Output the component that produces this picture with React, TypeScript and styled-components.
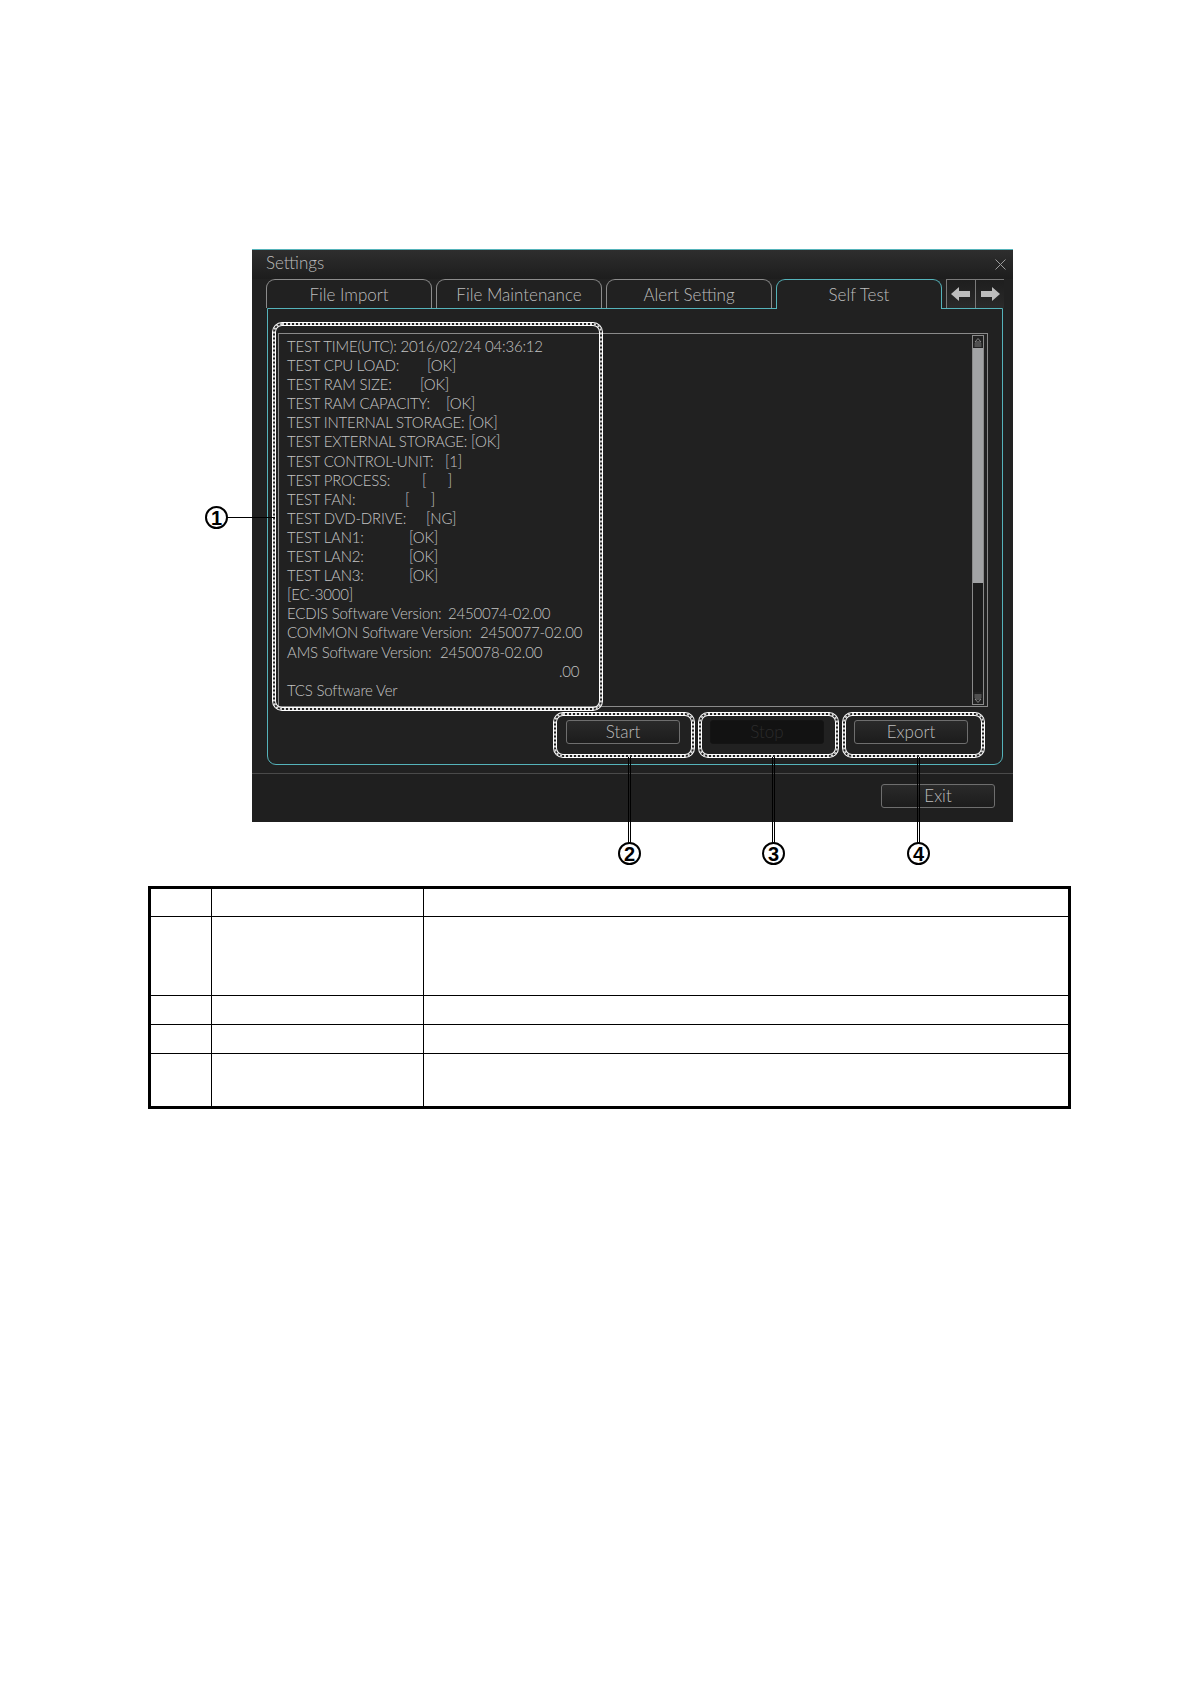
import React from "react";
import styled, { createGlobalStyle, css } from "styled-components";

const CYAN = "#55b3ba";
const PANEL_BG = "#212121";
const LINE_GREY = "#8a8a8a";
const TEXT = "#c4c4c4";

const GlobalStyle = createGlobalStyle`
  html, body {
    margin: 0;
    padding: 0;
    background: #ffffff;
  }
  body {
    font-family: "Liberation Sans", Arial, sans-serif;
  }
`;

type Line = { label: string; value?: string; tab?: number; empty?: boolean };

const lines: Line[] = [
  { label: "TEST TIME(UTC): 2016/02/24 04:36:12" },
  { label: "TEST CPU LOAD:", value: "[OK]", tab: 140 },
  { label: "TEST RAM SIZE:", value: "[OK]", tab: 133 },
  { label: "TEST RAM CAPACITY:", value: "[OK]", tab: 159 },
  { label: "TEST INTERNAL STORAGE: [OK]" },
  { label: "TEST EXTERNAL STORAGE: [OK]" },
  { label: "TEST CONTROL-UNIT:", value: "[1]", tab: 158 },
  { label: "TEST PROCESS:", value: "", tab: 135, empty: true },
  { label: "TEST FAN:", value: "", tab: 118, empty: true },
  { label: "TEST DVD-DRIVE:", value: "[NG]", tab: 139 },
  { label: "TEST LAN1:", value: "[OK]", tab: 122 },
  { label: "TEST LAN2:", value: "[OK]", tab: 122 },
  { label: "TEST LAN3:", value: "[OK]", tab: 122 },
  { label: "[EC-3000]" },
  { label: "ECDIS Software Version: ", value: "2450074-02.00", tab: 161 },
  { label: "COMMON Software Version: ", value: "2450077-02.00", tab: 193 },
  { label: "AMS Software Version: ", value: "2450078-02.00", tab: 153 },
  { label: "", value: ".00", tab: 272 },
  { label: "TCS Software Ver" },
];

const tabs = ["File Import", "File Maintenance", "Alert Setting", "Self Test"];

const ArrowIcon = ({ dir }: { dir: "left" | "right" }) => (
  <svg width="20" height="14" viewBox="0 0 20 14">
    <g transform={dir === "right" ? "translate(20 0) scale(-1 1)" : undefined}>
      <polygon points="0,7 8,0 8,4 19,4 19,10 8,10 8,14" fill="#bdbdbd" />
    </g>
  </svg>
);

const CloseIcon = () => (
  <svg width="11" height="11" viewBox="0 0 11 11">
    <path d="M0.5 0.5 L10.5 10.5 M10.5 0.5 L0.5 10.5" stroke="#9a9a9a" strokeWidth="1" />
  </svg>
);

const ScrollGlyph = ({ up }: { up: boolean }) => (
  <svg width="8" height="9" viewBox="0 0 8 9">
    <g transform={up ? undefined : "translate(0 9) scale(1 -1)"}>
      <path d="M4 0.5 L7 4 L1 4 Z" fill="none" stroke="#9a9a9a" strokeWidth="0.8" />
      <path d="M0.5 6 H7.5 M0.5 8 H7.5" stroke="#9a9a9a" strokeWidth="0.8" />
    </g>
  </svg>
);

export default function App() {
  return (
    <Page>
      <GlobalStyle />
      <Figure>
        <Panel>
          <TitleBar>
            <Title>Settings</Title>
            <CloseIcon />
          </TitleBar>
          <TabRow>
            {tabs.map((t) => (
              <Tab key={t} $active={t === "Self Test"}>
                {t}
              </Tab>
            ))}
            <ArrowGroup>
              <ArrowButton>
                <ArrowIcon dir="left" />
              </ArrowButton>
              <ArrowButton>
                <ArrowIcon dir="right" />
              </ArrowButton>
            </ArrowGroup>
          </TabRow>
          <Frame>
            <ListBox>
              <TextColumn>
                {lines.map((l, i) => (
                  <TextLine key={i}>
                    <Label $tab={l.tab}>{l.label}</Label>
                    {l.empty ? (
                      <EmptyBrackets>
                        <span>[</span>
                        <span>]</span>
                      </EmptyBrackets>
                    ) : (
                      l.value && <span>{l.value}</span>
                    )}
                  </TextLine>
                ))}
              </TextColumn>
              <ScrollBar>
                <ScrollCell>
                  <ScrollGlyph up />
                </ScrollCell>
                <Thumb />
                <Track />
                <ScrollCell>
                  <ScrollGlyph up={false} />
                </ScrollCell>
              </ScrollBar>
            </ListBox>
            <ButtonRow>
              <PanelButton>Start</PanelButton>
              <PanelButton disabled>Stop</PanelButton>
              <PanelButton>Export</PanelButton>
            </ButtonRow>
          </Frame>
          <Footer>
            <PanelButton>Exit</PanelButton>
          </Footer>
        </Panel>

        <Callout $left={21} $top={74} $width={329} $height={387} />
        <Callout $left={302} $top={464} $width={140} $height={44} />
        <Callout $left={447} $top={464} $width={139} $height={44} />
        <Callout $left={591} $top={464} $width={141} $height={44} />

        <HLeader style={{ left: -25, top: 268, width: 48 }} />
        <Marker style={{ left: -47, top: 257 }}>1</Marker>

        <VLeader style={{ left: 376, top: 508 }} />
        <Marker style={{ left: 366, top: 593 }}>2</Marker>
        <VLeader style={{ left: 520, top: 508 }} />
        <Marker style={{ left: 510, top: 593 }}>3</Marker>
        <VLeader style={{ left: 665, top: 508 }} />
        <Marker style={{ left: 655, top: 593 }}>4</Marker>
      </Figure>

      <Table>
        <tbody>
          <HeadRow>
            <NoCell />
            <NameCell />
            <Cell />
          </HeadRow>
          <Row $h={79}>
            <NoCell />
            <NameCell />
            <Cell />
          </Row>
          <Row $h={29}>
            <NoCell />
            <NameCell />
            <Cell />
          </Row>
          <Row $h={29}>
            <NoCell />
            <NameCell />
            <Cell />
          </Row>
          <Row $h={54}>
            <NoCell />
            <NameCell />
            <Cell />
          </Row>
        </tbody>
      </Table>
    </Page>
  );
}

const Page = styled.div`
  width: 1190px;
  min-height: 1684px;
  padding-top: 249px;
  box-sizing: border-box;
  background: #fff;
`;

const Figure = styled.div`
  position: relative;
  margin-left: 252px;
  width: 761px;
  padding-bottom: 64px;
`;

const Panel = styled.div`
  width: 761px;
  height: 573px;
  box-sizing: border-box;
  background: ${PANEL_BG};
  border-top: 1px solid ${CYAN};
  display: flex;
  flex-direction: column;
  font-family: Lato, "Open Sans", sans-serif;
  font-weight: 300;
  color: ${TEXT};
`;

const TitleBar = styled.div`
  height: 29px;
  display: flex;
  align-items: center;
  justify-content: space-between;
  padding: 0 7px 0 14px;
  background: linear-gradient(#2e2e2e, #1d1d1d);
`;

const Title = styled.span`
  font-size: 17px;
  color: #bcbcbc;
  margin-top: -4px;
`;

const TabRow = styled.div`
  position: relative;
  z-index: 1;
  display: flex;
  align-items: flex-start;
  height: 30px;
  margin-bottom: -1px;
  padding-left: 14px;
  gap: 4px;
`;

const Tab = styled.div<{ $active?: boolean }>`
  width: 166px;
  height: 29px;
  box-sizing: border-box;
  display: flex;
  align-items: center;
  justify-content: center;
  font-size: 17px;
  color: #bdbdbd;
  border: 1px solid #8c8c8c;
  border-bottom: none;
  border-radius: 9px 9px 0 0;
  ${({ $active }) =>
    $active &&
    css`
      height: 30px;
      border-color: ${CYAN};
      background: ${PANEL_BG};
      padding-bottom: 1px;
    `}
`;

const ArrowGroup = styled.div`
  display: flex;
`;

const ArrowButton = styled.div`
  width: 29px;
  height: 29px;
  box-sizing: border-box;
  display: flex;
  align-items: center;
  justify-content: center;
  border-top: 1px solid #7a7a7a;
  border-left: 1px solid #7a7a7a;
  background: linear-gradient(#1e1e1e, #2a2a2a);
`;

const Frame = styled.div`
  margin: 0 10px 0 15px;
  height: 457px;
  box-sizing: border-box;
  border: 1px solid ${CYAN};
  border-radius: 0 0 9px 9px;
  padding: 24px 14px 19px 10px;
  display: flex;
  flex-direction: column;
`;

const ListBox = styled.div`
  height: 374px;
  box-sizing: border-box;
  border: 1px solid ${LINE_GREY};
  display: flex;
  justify-content: space-between;
  padding: 1px 3px 1px 8px;
`;

const TextColumn = styled.div`
  padding-top: 2px;
  font-size: 15px;
  letter-spacing: -0.2px;
  line-height: 19.1px;
  color: ${TEXT};
`;

const TextLine = styled.div`
  display: flex;
  white-space: pre;
  height: 19.1px;
`;

const Label = styled.span<{ $tab?: number }>`
  display: inline-block;
  ${({ $tab }) => $tab !== undefined && `min-width: ${$tab}px;`}
`;

const EmptyBrackets = styled.span`
  display: inline-flex;
  justify-content: space-between;
  width: 30px;
`;

const ScrollBar = styled.div`
  width: 12px;
  box-sizing: border-box;
  border: 1px solid ${LINE_GREY};
  display: flex;
  flex-direction: column;
`;

const ScrollCell = styled.div`
  height: 12px;
  display: flex;
  align-items: center;
  justify-content: center;
  flex-shrink: 0;
`;

const Thumb = styled.div`
  height: 235px;
  background: #a2a3a5;
`;

const Track = styled.div`
  flex: 1;
  background: #1c1c1c;
`;

const ButtonRow = styled.div`
  display: flex;
  justify-content: flex-end;
  gap: 30px;
  margin-top: 13px;
  padding-right: 20px;
`;

const PanelButton = styled.button`
  width: 114px;
  height: 24px;
  box-sizing: border-box;
  border: 1px solid #6e6e6e;
  border-radius: 3px;
  background: linear-gradient(#2a2a2a, #1c1c1c);
  color: #bdbdbd;
  font-family: Lato, "Open Sans", sans-serif;
  font-weight: 300;
  font-size: 17px;
  padding: 0;
  line-height: 20px;

  &:disabled {
    border-color: #141414;
    background: #121212;
    color: #2c2c2c;
  }
`;

const Footer = styled.div`
  margin-top: 8px;
  border-top: 1px solid #4a4a4a;
  flex: 1;
  display: flex;
  justify-content: flex-end;
  align-items: flex-start;
  padding: 10px 18px 0 0;
  background: #1f1f1f;
`;

const Callout = styled.div<{ $left: number; $top: number; $width: number; $height: number }>`
  position: absolute;
  left: ${({ $left }) => $left}px;
  top: ${({ $top }) => $top}px;
  width: ${({ $width }) => $width}px;
  height: ${({ $height }) => $height}px;
  box-sizing: border-box;
  border: 2px dotted #d8d8d8;
  border-radius: 9px;
  box-shadow: 0 0 0 1px #ffffff, inset 0 0 0 1px #ffffff;
  pointer-events: none;
`;

const Marker = styled.div`
  position: absolute;
  width: 23px;
  height: 23px;
  box-sizing: border-box;
  border: 2px solid #000;
  border-radius: 50%;
  background: #fff;
  display: flex;
  align-items: center;
  justify-content: center;
  font-family: "Liberation Sans", Arial, sans-serif;
  font-weight: bold;
  font-size: 20px;
  line-height: 1;
  color: #000;
`;

const HLeader = styled.div`
  position: absolute;
  height: 0;
  border-top: 1.5px solid #000;
`;

const VLeader = styled.div`
  position: absolute;
  width: 0;
  height: 86px;
  border-left: 3px double #000;
`;

const Table = styled.table`
  margin-left: 148px;
  width: 923px;
  border-collapse: collapse;
  border: 3px solid #000;
  table-layout: fixed;
`;

const Row = styled.tr<{ $h: number }>`
  height: ${({ $h }) => $h}px;
`;

const HeadRow = styled.tr`
  height: 29px;
`;

const Cell = styled.td`
  border: 1px solid #000;
  padding: 0;
`;

const NoCell = styled(Cell)`
  width: 60px;
`;

const NameCell = styled(Cell)`
  width: 211px;
`;
